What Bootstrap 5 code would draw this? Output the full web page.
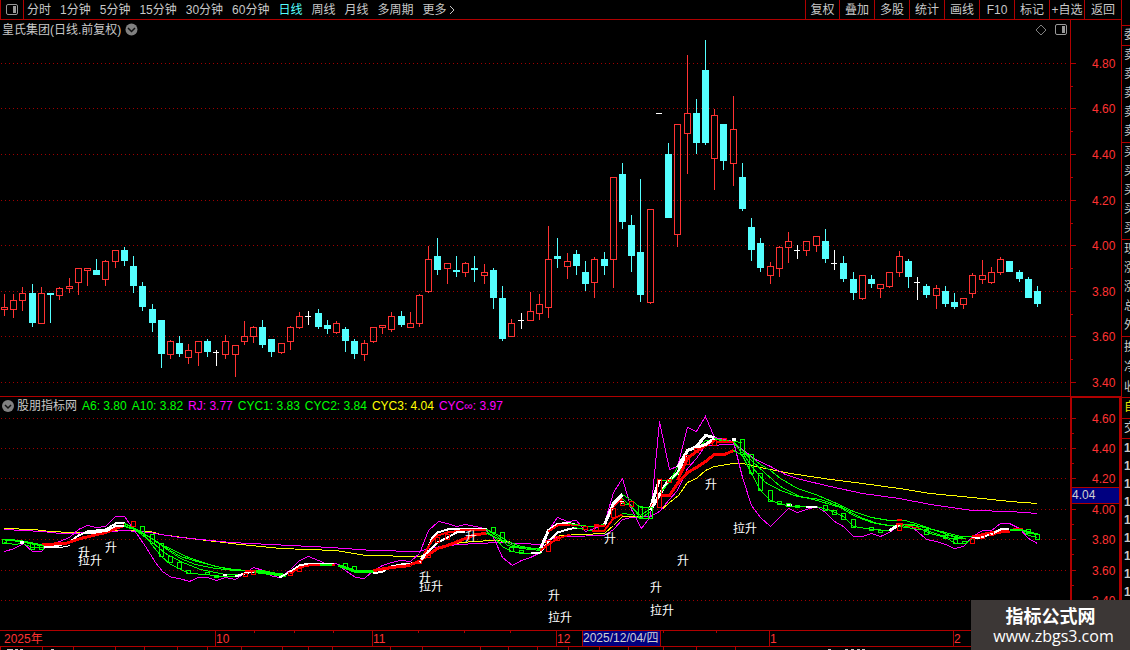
<!DOCTYPE html>
<html lang="zh-CN">
<head>
<meta charset="utf-8">
<meta name="viewport" content="width=device-width, initial-scale=1">
<title>皇氏集团 日线</title>
<link href="https://cdn.jsdelivr.net/npm/bootstrap@5.3.0/dist/css/bootstrap.min.css" rel="stylesheet">
<style>
:root{--rule:#b00000;--ink:#c8c8c8;--red:#ff3232}
body{background:#000;color:var(--ink);font:12px/18px "Liberation Sans","Noto Sans CJK SC",sans-serif;overflow:hidden}
button{background:none;border:0;padding:0;color:inherit;white-space:nowrap}
.topbar{height:20px;border-bottom:1px solid var(--rule)}
.layout-btn{width:24px;border-left:1px solid var(--rule);border-right:1px solid var(--rule)}
.periods{gap:9px;padding-left:3px}
.periods .active{color:#54ffff}
.tool{width:35px;border-left:1px solid var(--rule)}
.tool:first-child{width:34px}
.tool:last-child{width:37px}
.pane-title{height:19px;padding-left:2px;padding-right:3px}
.axis-gap{width:51px;border-left:1px solid var(--rule)}
.legend-row{height:18px;border-top:1px solid var(--rule)}
.legend-row .axis-gap{border:2px solid var(--rule);border-bottom:0;border-top-width:1px}
.legend-list{gap:5px;padding-left:2px}
.legend-name{margin-left:-2px}
.quotes{width:9px;border-left:1px solid var(--rule)}
.quotes div{padding-left:2px;border-bottom:1px solid var(--rule);line-height:19px;overflow:hidden}
.quotes span{display:block;width:12px}
.quotes .q-top{height:26px}
.quotes .q-one{height:20px}
.quotes .q-five{height:97px}
.quotes .q-three{height:61px;line-height:20px}
.quotes .q-self{height:21px;color:#e6e600}
.quotes .q-vol{border:0;line-height:18px;font-weight:bold}
.lime{color:#00ff00}.fuchsia{color:#ff00ff}.yell{color:#ffff00}
.watermark{position:absolute;right:0;bottom:0;width:159px;height:50px;background:#3c3736;color:#fff;padding-top:4px;text-align:center}
.wm-name{font:bold 18px/22px "Noto Sans CJK SC",sans-serif}
.wm-site{font:16px/20px "Open Sans","Noto Sans",sans-serif;padding-left:6px}
.screen{height:100vh;min-height:650px;overflow:hidden}
.plot{display:block;width:100%;height:auto}
.plot text{font-size:12px;fill:var(--red)}
.plot .sig text{fill:#fff}
</style>
</head>
<body>
<div class="screen d-flex position-relative">
  <main class="flex-grow-1 overflow-hidden">
    <header class="topbar d-flex">
      <button class="layout-btn d-flex align-items-center justify-content-center" aria-label="布局"><svg width="12" height="11"><rect x=".5" y=".5" width="11" height="10" rx="1.500" fill="none" stroke="#999"/><path d="M7 2h3v7H7z" fill="#999"/></svg></button>
      <nav class="periods d-flex flex-grow-1">
        <button>分时</button><button>1分钟</button><button>5分钟</button><button>15分钟</button><button>30分钟</button><button>60分钟</button><button class="active">日线</button><button>周线</button><button>月线</button><button>多周期</button><button>更多<svg width="10" height="9"><path d="M3 0l4 4-4 4" fill="none" stroke="#c8c8c8"/></svg></button>
      </nav>
      <div class="d-flex"><button class="tool">复权</button><button class="tool">叠加</button><button class="tool">多股</button><button class="tool">统计</button><button class="tool">画线</button><button class="tool">F10</button><button class="tool">标记</button><button class="tool">+自选</button><button class="tool">返回</button></div>
    </header>
    <div class="d-flex">
      <div class="pane-title d-flex align-items-center flex-grow-1">
        <span>皇氏集团(日线.前复权)</span>
        <button class="d-flex ms-1" aria-label="展开"><svg width="13" height="13"><circle cx="6.500" cy="6.500" r="6" fill="#808080"/><path d="M3 5l3.500 3.500L10 5" fill="none" stroke="#111" stroke-width="1.500"/></svg></button>
        <button class="d-flex ms-auto" aria-label="标记"><svg width="12" height="12"><path d="M6 1l5 5-5 5-5-5z" fill="none" stroke="#808080"/></svg></button>
        <button class="d-flex ms-2" aria-label="侧栏"><svg width="12" height="12"><rect x=".5" y=".5" width="11" height="10" rx="1.500" fill="none" stroke="#999"/><path d="M7 2h3v7H7z" fill="#999"/></svg></button>
      </div>
      <div class="axis-gap"></div>
    </div>
    <svg class="plot" id="price" viewBox="0 39 1121 357"></svg>
    <div class="legend-row d-flex">
      <div class="d-flex align-items-center flex-grow-1 legend-list">
        <button class="d-flex" aria-label="指标菜单"><svg width="12" height="12"><circle cx="6" cy="6" r="6" fill="#808080"/><path d="M3 5l3 3 3-3" fill="none" stroke="#111" stroke-width="1.500"/></svg></button>
        <span class="legend-name">股朋指标网</span><span class="lime">A6: 3.80</span><span class="lime">A10: 3.82</span><span class="fuchsia">RJ: 3.77</span><span class="lime">CYC1: 3.83</span><span class="lime">CYC2: 3.84</span><span class="yell">CYC3: 4.04</span><span class="fuchsia">CYC∞: 3.97</span>
      </div>
      <div class="axis-gap"></div>
    </div>
    <svg class="plot" id="study" viewBox="0 414 1121 236"></svg>
  </main>
  <aside class="quotes overflow-hidden flex-shrink-0">
    <div class="q-top"></div>
    <div class="q-one"><span>委</span></div>
    <div class="q-five"><span>卖</span><span>卖</span><span>卖</span><span>卖</span><span>卖</span></div>
    <div class="q-five"><span>买</span><span>买</span><span>买</span><span>买</span><span>买</span></div>
    <div class="q-five"><span>现</span><span>涨</span><span>涨</span><span>总</span><span>外</span></div>
    <div class="q-three"><span>换</span><span>净</span><span>收</span></div>
    <div class="q-self"><span>自</span></div>
    <div class="q-one"><span>交</span></div>
    <div class="q-vol"><span>1</span><span>1</span><span>1</span><span>1</span><span>1</span><span>1</span><span>1</span><span>1</span><span>1</span></div>
  </aside>
  <div class="watermark"><div class="wm-name">指标公式网</div><div class="wm-site">www.zbgs3.com</div></div>
</div>
<script src="https://cdn.jsdelivr.net/npm/bootstrap@5.3.0/dist/js/bootstrap.bundle.min.js"></script>
<script>
// centre x, kind (r rise, c fall, w flat), high, body top, body bottom, low
const candles = `4 r 294 307 310 316|13 r 294 300 310 318|22 r 287 293 301 311|32 c 284 293 323 327|41 r 287 293 324 324|50 c 293 293 295 323|59 r 287 288 296 300|69 r 278 286 289 293|78 r 268 268 283 295|87 r 268 268 271 286|96 c 259 270 275 275|105 r 260 261 280 286|115 r 250 250 262 268|124 c 247 250 261 266|133 c 256 266 286 293|142 c 282 286 307 311|152 c 304 309 323 332|161 c 320 320 354 368|170 r 340 341 355 359|179 c 336 343 354 357|188 r 344 350 358 364|198 r 341 341 353 366|207 c 339 341 352 357|216 w 350 352 353 366|225 r 335 341 355 359|235 r 345 345 355 377|244 r 321 336 342 345|253 r 326 327 337 343|262 c 320 327 345 348|271 c 339 339 352 357|281 r 343 343 353 354|290 r 326 327 342 350|299 r 312 316 328 329|308 w 311 316 317 325|318 c 309 313 327 329|327 c 320 325 329 334|336 r 321 323 333 334|345 c 327 329 341 352|354 c 339 341 354 359|364 r 340 343 355 361|373 r 327 327 342 343|382 r 325 325 328 334|391 r 312 316 330 332|401 c 311 316 325 327|410 r 312 323 328 328|419 r 294 295 324 327|428 r 246 259 292 293|437 c 238 256 270 275|447 r 263 263 269 284|456 c 256 270 272 277|465 r 262 263 273 277|474 c 256 268 270 282|484 r 264 272 276 284|493 c 268 270 298 309|502 c 286 298 339 341|511 r 319 323 337 337|521 w 313 320 321 329|530 r 292 311 321 321|539 r 294 304 314 320|548 r 226 259 308 318|557 c 238 256 259 268|567 r 253 261 267 279|576 c 250 254 266 275|585 c 261 272 284 291|594 r 257 259 283 298|604 c 252 259 266 275|613 r 177 177 260 288|622 c 163 174 222 229|631 c 215 225 256 272|640 c 179 252 295 302|650 r 209 209 303 304|659 w 113 113 114 114|668 c 143 154 218 218|677 r 124 124 235 247|687 r 55 113 134 174|696 c 99 113 143 154|705 c 40 70 143 145|714 r 109 115 159 190|723 c 124 124 161 170|733 r 96 129 164 186|742 c 163 177 209 211|751 c 218 227 250 261|760 c 238 243 268 272|770 r 262 266 276 284|779 r 246 247 269 277|788 r 232 241 248 263|797 w 245 250 251 259|806 r 241 241 251 256|816 r 236 236 246 252|825 c 229 241 259 263|834 w 250 263 264 270|843 c 256 263 279 282|853 c 272 279 293 300|862 r 275 275 299 300|871 c 275 279 284 288|880 r 284 284 289 298|889 r 272 272 287 288|899 r 251 256 273 277|908 c 259 261 277 288|917 w 277 282 283 300|926 c 284 286 295 298|936 r 285 288 296 309|945 c 286 291 304 307|954 c 293 302 307 309|963 r 298 298 305 309|972 r 273 275 294 298|982 r 260 275 280 284|991 r 267 272 283 284|1000 r 257 259 273 275|1009 c 261 261 272 272|1019 c 270 272 279 282|1028 c 277 279 298 298|1037 c 286 291 304 307`;
const RULE = '#b00000';
const box = (x, y, w, h, c) => `<rect x="${x}" y="${y}" width="${w}" height="${h}" fill="${c}"/>`;
const hollow = (x, y, w, h, c) => box(x, y, w, 1, c) + box(x, y + h - 1, w, 1, c) + box(x, y, 1, h, c) + box(x + w - 1, y, 1, h, c);
const label = (x, y, t, f) => `<text x="${x}" y="${y}"${f ? ` style="fill:${f}"` : ''}>${t}</text>`;
const grid = y => `<path d="M1 ${y + .5}H1067" stroke="#a00000" stroke-dasharray="1 3"/>`;
const crisp = s => `<g shape-rendering="crispEdges">${s}</g>`;

// price pane
const col = {r: '#ff3232', c: '#54ffff', w: '#ffffff'};
let g = box(1070, 39, 1, 357, RULE), t = '';
[63, 108, 154, 200, 245, 291, 336, 382].forEach((y, i) => {
  g += grid(y) + box(1071, y, 5, 1, RULE);
  if (i < 7) g += box(1071, y + 23, 2, 1, RULE);
  t += label(1092, y + 5, (4.8 - i * .2).toFixed(2));
});
candles.split('|').forEach(r => {
  const [xs, k, ...n] = r.split(' '), x = +xs, [hi, a, b, lo] = n.map(Number), c = col[k];
  g += box(x, hi, 1, a - hi, c) + box(x, b, 1, lo - b, c);
  g += k === 'r' ? hollow(x - 3, a, 7, b - a, c) : box(x - 3, a, k === 'w' ? 6 : 7, b - a, c);
});
document.getElementById('price').innerHTML = crisp(g) + t;

// study pane: colour, stroke width, points
const F = '#ff00ff', Y = '#ffff00', G = '#00ff00', R = '#ff0000', W = '#ffffff';
const lines = [
[Y,1,'4,528 33,529 50,531 70,532 105,531 124,530 150,531 160,534 190,538 240,544 280,548 335,550 365,555 419,556 430,552 445,546 460,542 490,540 510,541'],
[Y,1,'540,545 550,538 560,535 604,533 613,525 622,516 650,516 659,511 669,502 678,495 687,482 696,478 705,470 714,466 733,463 742,463 755,466 790,473 830,479 862,483 899,488 930,493 972,497 1010,501 1037,503'],
[F,1,'4,529 42,531 60,533 100,532 124,530 150,532 160,534 180,537 200,539 230,542 270,544 330,547 372,550 419,551 428,548 447,545 475,543 500,542 540,544 550,538 567,536 604,535 613,529 622,519 631,517 650,516 659,511 669,499 677,490 687,468 696,458 705,445 733,444 742,449 755,459 770,466 785,474 800,479 830,486 862,493 899,498 930,504 972,510 1010,511 1037,513'],
[F,1,'4,551 14,548 23,543 32,551 41,551 48,544 59,541 69,537 78,529 87,525 96,527 105,526 115,516 124,516 134,530 145,546 155,562 162,571 171,577 179,578 189,581 198,577 207,577 216,580 225,577 235,579 244,573 253,567 263,570 272,576 281,577 290,569 299,560 308,556 318,560 327,564 336,563 345,570 355,577 364,578 373,570 382,565 391,562 400,560 410,561 419,553 428,530 438,521 447,523 456,526 465,524 475,526 484,528 493,537 502,557 512,565 521,560 530,557 540,552 548,530 557,517 567,521 576,520 585,531 594,528 604,523 613,492 622,478 631,509 641,528 650,516 659,421 669,469 677,466 687,427 696,431 705,416 714,437 733,441 742,477 751,505 760,517 770,526 788,508 797,512 806,509 816,506 825,512 834,521 843,526 853,536 862,536 871,533 880,536 889,532 899,524 908,524 917,531 926,539 936,541 945,544 954,548 963,546 972,536 982,530 991,530 1000,523 1009,523 1019,528 1028,538 1037,543'],
[G,2,'4,539 14,540 22,541 32,543 42,545'],[G,1,'4,542 14,544 22,543 32,547 42,547'],[W,3,'19,542 23,542'],
[W,2,'42,545 58,545 70,541 78,535 87,531 105,529 115,523 125,522'],
[R,3,'42,544 65,543 80,538 105,532 115,528 124,525'],
[W,1,'42,547 60,547 70,545'],[W,2,'85,533 96,532 107,530 116,525 125,525'],
[G,1,'124,523 134,528 145,534 155,540 165,547 180,556 200,562 225,568 245,570 262,570 281,574'],
[G,1,'124,525 134,529 150,537 165,548 180,558 195,564 215,568 235,570 254,570'],
[G,1,'124,526 134,529 152,542 165,553 180,561 200,569 225,574 240,574'],
[G,1,'134,528 142,532 152,545 161,556 170,564 179,568 188,573 207,574 216,576 225,576 235,576'],
[G,1,'165,546 188,557 215,566 240,570'],
[W,2,'222,574 226,574'],[W,2,'235,576 244,573 253,571'],[R,2,'244,570 254,570'],[R,1,'262,571 275,573'],
[G,3,'254,571 270,573 286,575'],[W,2,'279,577 290,571 299,565 308,563 333,563'],[R,2,'290,573 299,567 308,565 335,564'],[G,2,'319,564 331,564'],
[G,3,'338,565 347,568 355,571 373,571'],
[W,2,'373,573 382,571 391,566 401,564 411,563 419,561 426,550 432,537 437,532 447,529 460,528 486,528'],
[R,3,'373,570 391,567 410,565'],[R,3,'410,564 419,561 428,554 437,548 447,545 465,538 475,534 486,533'],
[R,2,'423,554 432,540 437,535 447,532 460,530 486,529'],
[W,2,'419,562 426,553 437,542 447,537 456,532 465,531'],
[G,1,'486,529 497,534 507,541 521,546 540,549'],[G,1,'486,529 497,536 507,545 521,548 540,550'],[G,1,'486,531 493,536 503,547 512,551 521,553 540,553'],[G,1,'486,533 500,539 515,546 530,548 540,548'],
[W,2,'531,553 540,552 548,541 557,532 567,529 576,527'],[W,3,'540,548 548,530 557,524 567,523 574,524'],
[R,2,'540,550 548,544 557,538 570,534'],[R,2,'548,531 557,525 570,524 579,524'],
[G,1,'568,523 580,525 590,526 604,524'],[G,1,'574,527 590,530 600,530'],[R,2,'594,525 604,525 613,506 622,498'],[W,3,'604,524 613,503 622,494'],
[R,2,'591,530 604,530 613,518 622,514'],[W,3,'619,502 623,502'],
[G,1,'622,494 631,500 640,507 650,507 659,479'],[G,1,'622,503 631,505 640,518 650,511'],[G,1,'622,513 631,514 640,518 650,518'],[G,1,'622,498 640,515 650,508'],
[W,3,'650,507 659,479'],[R,3,'650,508 659,495 669,495 677,483 687,472 696,467 705,461 714,454 724,454 733,450'],[W,3,'650,510 659,494 668,480 677,473 687,450'],
[G,1,'659,493 668,483 677,474 687,459 696,451 705,440 714,439 733,441'],[G,1,'659,479 669,481 677,467 687,450'],
[R,3,'677,480 687,458 696,451 705,445 714,440'],[W,3,'677,467 687,450 696,446 705,435 714,437'],[W,3,'687,450 705,444 714,438'],
[G,1,'714,438 724,440 742,442'],[G,1,'714,438 733,442 742,453'],[R,2,'715,441 733,441'],[W,3,'731,439 735,439'],
[G,1,'733,441 742,450 751,457 760,464 770,470 780,478 797,488 815,494 834,502 853,511 871,517 889,520 905,520 918,524 935,530 950,535 965,538'],
[G,1,'742,450 751,460 765,473 780,486 797,495 820,501 840,507 853,515 871,522 889,525 912,524 935,530 955,537 965,538'],
[G,1,'742,452 751,466 765,482 780,490 797,496 820,499 840,506 860,517 880,524 899,526 926,530 950,538 965,538'],
[G,1,'733,450 742,455 751,473 760,490 770,500 779,503 790,506 816,506 830,510 843,516 853,526 871,529 889,530 899,525 917,527 930,533 945,537 955,543 965,543 972,538'],
[G,1,'900,524 920,526 945,532 960,536 972,536'],
[W,2,'806,507 817,506'],[W,2,'786,504 791,504'],[W,3,'889,530 899,524'],[R,2,'895,523 902,523'],[R,2,'896,519 901,519'],[R,1,'905,525 920,528'],
[R,4,'972,537 985,534 1000,531 1009,530'],[W,2,'972,538 980,537 990,534 1000,529 1009,528'],
[G,2,'1009,529 1019,529 1030,532 1037,534'],[G,1,'1019,528 1028,535 1037,537'],[R,1,'1012,528 1022,528']];
const gb = '2 539 5 5|30 543 5 7|39 545 5 5|140 526 5 8|150 534 5 10|159 543 5 14|168 556 5 7|177 562 5 7|186 570 5 4|205 572 5 3|214 575 5 3|343 563 5 6|352 566 5 6|491 527 5 6|500 532 5 9|509 547 5 5|519 550 5 3|638 506 5 12|648 507 5 12|740 439 5 16|749 454 5 20|758 473 5 18|768 490 5 12|777 501 5 4|786 503 5 4|795 505 5 3|823 505 5 6|832 510 5 5|841 513 5 7|851 519 5 9|869 527 5 4|878 530 5 3|924 529 5 6|943 535 5 4|953 539 5 5|962 541 5 3|1026 529 5 5|1035 534 5 6';
const rb = '131 521 5 6|243 573 5 4|251 570 5 5|288 572 5 4|297 568 5 4|417 560 5 4|426 554 5 4|435 537 5 6|445 534 5 6|546 540 5 12|555 536 5 5|583 526 5 4|594 524 5 8|611 508 5 10|620 502 5 4|629 501 5 6|657 479 5 29|685 455 5 10|667 479 5 4|694 448 5 5|712 440 5 6|722 438 5 4|897 524 5 7|970 538 5 6|980 535 5 4|989 532 5 4';
g = box(1070, 414, 2, 216, RULE) + box(1119, 414, 2, 216, RULE); t = '';
[418, 448, 478, 509, 539, 570, 600].forEach((y, i) => {
  g += grid(y) + box(1072, y, 4, 1, RULE);
  if (i < 6) g += box(1072, y + 15, 2, 1, RULE);
  t += label(1092, y + 5, (4.6 - i * .2).toFixed(2));
});
lines.forEach(([c, w, p]) => {
  g += `<polyline points="${p}" transform="translate(.5 .5)" fill="none" stroke="${c}" stroke-width="${w}"/>`;
});
gb.split('|').forEach(b => g += hollow(...b.split(' ').map(Number), G));
rb.split('|').forEach(b => g += hollow(...b.split(' ').map(Number), R));
g += box(1072, 487, 47, 17, RULE) + box(1072, 488, 47, 15, '#000080');
t += label(1072, 499, '4.04', '#d0d0d0');

// time axis
g += box(0, 630, 1121, 1, RULE) + box(0, 646, 1121, 1, RULE);
[215, 372, 556, 769, 953].forEach(x => g += box(x, 630, 1, 16, RULE));
[254, 294, 333, 418, 464, 510, 663, 716].forEach(x => g += box(x, 631, 1, 2, RULE));
[0, 42, 73, 115, 144, 177, 207, 241, 282, 308, 332, 390, 422, 480, 508, 537, 568, 599, 628, 663, 696, 735].forEach(x => g += box(x, 647, 1, 3, RULE));
[7, 10, 15, 20, 51, 828, 845, 851, 857, 862].forEach(x => g += box(x, 649, 3, 1, '#c8c8c8'));
g += box(582, 630, 79, 17, RULE) + box(583, 631, 77, 15, '#000080');
t += label(4, 643, '2025年') + label(216, 643, '10') + label(373, 643, '11') + label(557, 643, '12') + label(770, 643, '1') + label(954, 643, '2') + label(583, 642, '2025/12/04/四', '#d0d0d0');

const signals = [[78,557,'升'],[78,565,'拉升'],[105,552,'升'],[419,582,'升'],[419,591,'拉升'],[465,541,'升'],[548,600,'升'],[548,622,'拉升'],[604,543,'升'],[650,592,'升'],[650,615,'拉升'],[677,565,'升'],[705,489,'升'],[733,533,'拉升']];
document.getElementById('study').innerHTML = crisp(g) + t + `<g class="sig">${signals.map(s => label(...s)).join('')}</g>`;
</script>
</body>
</html>
